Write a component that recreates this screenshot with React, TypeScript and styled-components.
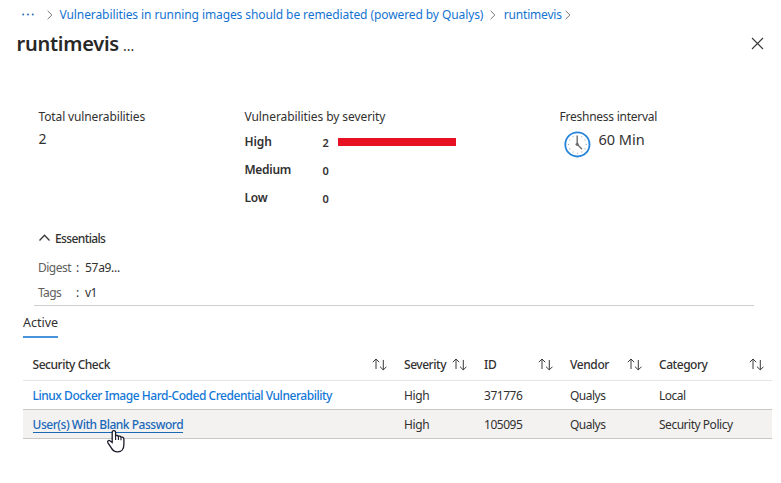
import React from 'react';
import styled, { createGlobalStyle } from 'styled-components';

const GlobalStyle = createGlobalStyle`
  * { box-sizing: border-box; }
  body {
    margin: 0;
    background: #fff;
    color: #323130;
    font-family: "Noto Sans", "Open Sans", sans-serif;
    font-size: 12px;
    overflow: hidden;
  }
`;

const Text = styled.span<{ $size?: number; $weight?: number; $track?: number; $color?: string }>`
  font-size: ${(p) => p.$size ?? 12}px;
  font-weight: ${(p) => p.$weight ?? 400};
  letter-spacing: ${(p) => p.$track ?? 0}px;
  color: ${(p) => p.$color ?? '#323130'};
  white-space: nowrap;
`;

const Page = styled.main`
  position: relative;
  width: 781px;
  height: 483px;
  overflow: hidden;
  background: #fff;
`;

const Breadcrumb = styled.nav`
  display: flex;
  align-items: center;
  height: 28px;
  padding: 1px 0 0 22px;
`;

const Crumb = styled.a<{ $track: number; $gap: number }>`
  color: #1373d1;
  letter-spacing: ${(p) => p.$track}px;
  margin-left: ${(p) => p.$gap}px;
  white-space: nowrap;
`;

const ChevronSvg = styled.svg<{ $gap: number }>`
  flex: none;
  margin-left: ${(p) => p.$gap}px;
`;

const Header = styled.header`
  display: flex;
  align-items: center;
  height: 31px;
  padding: 0 17px 0 16px;
`;

const Title = styled.h1`
  margin: 0 0 0 0.5px;
  font-size: 20px;
  font-weight: 600;
  letter-spacing: -0.25px;
  line-height: 28px;
  color: #292827;
`;

const More = styled.span`
  margin: 5px auto 0 4px;
  font-size: 14px;
  line-height: 20px;
`;

const Summary = styled.section`
  display: grid;
  grid-template-columns: 206px 315px 1fr;
  height: 169px;
  padding: 49px 0 0 38.5px;
`;

const Metric = styled.div`
  display: flex;
  flex-direction: column;
  align-items: flex-start;
  line-height: 18px;
`;

const MetricValue = styled.div`
  display: flex;
  align-items: flex-start;
  padding-top: 4px;
`;

const ClockSvg = styled.svg`
  flex: none;
  margin: 1px 8px 0 4px;
`;

const SeverityList = styled.div`
  padding-top: 2px;
`;

const SeverityRow = styled.div`
  display: grid;
  grid-template-columns: 78px 15.5px 118px;
  align-items: center;
  height: 28px;
`;

const Count = styled.span`
  padding-top: 2px;
  font-size: 11px;
  font-weight: 600;
`;

const Bar = styled.div`
  height: 8px;
  background: #e81123;
`;

const Essentials = styled.section`
  width: 720px;
  height: 78px;
  margin-left: 34px;
  padding-left: 4px;
  border-bottom: 1px solid #cfcfcf;
`;

const EssentialsToggle = styled.div`
  display: flex;
  align-items: center;
  gap: 4px;
  height: 20px;
`;

const Property = styled.div`
  display: grid;
  grid-template-columns: 38px 9px 1fr;
  align-items: center;
  height: 25px;
  line-height: 25px;
`;

const PropertyList = styled.div`
  padding-top: 7px;
`;

const Tabs = styled.div`
  display: flex;
  height: 32px;
  padding-left: 23px;
`;

const Tab = styled.div`
  width: 35px;
  height: 32px;
  border-bottom: 2px solid #4a94dc;
  line-height: 33px;
`;

const Table = styled.div`
  width: 749px;
  margin-left: 23px;
`;

const Row = styled.div<{ $kind: 'head' | 'plain' | 'hover' }>`
  display: grid;
  grid-template-columns: 371.5px 80px 86px 89px 113px;
  align-items: center;
  height: ${(p) => (p.$kind === 'head' ? 43 : 29)}px;
  padding: ${(p) => (p.$kind === 'head' ? '10px 0 0 9.5px' : '0 0 0 9.5px')};
  background: ${(p) => (p.$kind === 'hover' ? '#f3f2f1' : '#fff')};
  border-bottom: 1px solid ${(p) => (p.$kind === 'head' ? '#e6e6e6' : '#c8c8c8')};
`;

const HeadCell = styled.div<{ $last?: boolean }>`
  display: flex;
  align-items: center;
  justify-content: space-between;
  padding-right: ${(p) => (p.$last ? 8.5 : 17.5)}px;
`;

const CheckLink = styled.a<{ $underlined?: boolean; $track: number }>`
  justify-self: start;
  height: 16px;
  margin-top: 1px;
  font-weight: 500;
  line-height: 16px;
  letter-spacing: ${(p) => p.$track}px;
  color: ${(p) => (p.$underlined ? '#1a68b8' : '#1277d6')};
  box-shadow: ${(p) => (p.$underlined ? '0 -1px 0 #1a68b8 inset' : 'none')};
  white-space: nowrap;
`;

const Pointer = styled.svg`
  position: absolute;
  left: 106px;
  top: 429px;
`;

function Chevron({ gap }: { gap: number }) {
  return (
    <ChevronSvg $gap={gap} width="6" height="10" viewBox="0 0 6 10" fill="none" stroke="#797775">
      <path d="M0.6 0.8 4.9 5 0.6 9.2" />
    </ChevronSvg>
  );
}

function SortIcon() {
  return (
    <svg width="15" height="13" viewBox="0 0 15 13" fill="none" stroke="#3b3a39">
      <path d="M4 11V1.2M0.8 4.2 4 1l3.2 3.2M11.3 2v9.800M8 8.700l3.300 3.200 3.200-3.200" />
    </svg>
  );
}

const ticks = [30, 60, 90, 120, 150, 180, 210, 240, 270, 300, 330];

function Clock() {
  return (
    <ClockSvg width="27" height="27" viewBox="0 0 27 27">
      <circle cx="13.4" cy="13.4" r="12.1" fill="#fff" stroke="#2584db" strokeWidth="1.8" />
      {ticks.map((angle) => (
        <circle key={angle} cx="13.4" cy="4.6" r="0.55" fill="#999" transform={`rotate(${angle} 13.4 13.4)`} />
      ))}
      <path d="M13.2 4.5V13.2L18 18.3" fill="none" stroke="#777" strokeWidth="1.5" />
      <circle cx="13.2" cy="13.3" r="1.6" fill="#6e6e6e" />
    </ClockSvg>
  );
}

const severities = [
  { name: 'High', count: 2, track: -0.1 },
  { name: 'Medium', count: 0, track: -0.3 },
  { name: 'Low', count: 0, track: -0.2 },
];

const columns = [
  { name: 'Security Check', track: -0.46 },
  { name: 'Severity', track: -0.46 },
  { name: 'ID', track: -0.3 },
  { name: 'Vendor', track: -0.4 },
  { name: 'Category', track: -0.46 },
];

const checks = [
  { name: 'Linux Docker Image Hard-Coded Credential Vulnerability', severity: 'High', id: '371776', vendor: 'Qualys', category: 'Local', track: -0.46, hover: false },
  { name: 'User(s) With Blank Password', severity: 'High', id: '105095', vendor: 'Qualys', category: 'Security Policy', track: -0.47, hover: true },
];

export default function App() {
  return (
    <Page>
      <GlobalStyle />
      <Breadcrumb>
        <svg width="13" height="3" viewBox="0 0 13 3" fill="#2d6fbe">
          <circle cx="1.2" cy="1.5" r="1" />
          <circle cx="6" cy="1.5" r="1" />
          <circle cx="10.8" cy="1.5" r="1" />
        </svg>
        <Chevron gap={12} />
        <Crumb $track={-0.09} $gap={6.5}>Vulnerabilities in running images should be remediated (powered by Qualys)</Crumb>
        <Chevron gap={7} />
        <Crumb $track={-0.2} $gap={7.5}>runtimevis</Crumb>
        <Chevron gap={3} />
      </Breadcrumb>
      <Header>
        <Title>runtimevis</Title>
        <More>...</More>
        <svg width="13" height="13" viewBox="0 0 13 13" stroke="#3b3a39" strokeWidth="1.1">
          <path d="M1 1l11 11M12 1 1 12" />
        </svg>
      </Header>
      <Summary>
        <Metric>
          <Text $track={-0.13}>Total vulnerabilities</Text>
          <MetricValue><Text $size={14}>2</Text></MetricValue>
        </Metric>
        <Metric>
          <Text $track={-0.08}>Vulnerabilities by severity</Text>
          <SeverityList>
            {severities.map((s) => (
              <SeverityRow key={s.name}>
                <Text $weight={600} $track={s.track}>{s.name}</Text>
                <Count>{s.count}</Count>
                {s.count > 0 && <Bar />}
              </SeverityRow>
            ))}
          </SeverityList>
        </Metric>
        <Metric>
          <Text $track={-0.25}>Freshness interval</Text>
          <MetricValue>
            <Clock />
            <Text $size={14.5}>60 Min</Text>
          </MetricValue>
        </Metric>
      </Summary>
      <Essentials>
        <EssentialsToggle>
          <svg width="13" height="8" viewBox="0 0 13 8" fill="none" stroke="#3b3a39" strokeWidth="1.3">
            <path d="M1.5 6.5 6.5 1.2l5 5.3" />
          </svg>
          <Text $weight={500} $track={-0.62}>Essentials</Text>
        </EssentialsToggle>
        <PropertyList>
          <Property>
            <Text $track={-0.5} $color="#605e5c">Digest</Text>
            <Text>:</Text>
            <Text $track={-0.3}>57a9...</Text>
          </Property>
          <Property>
            <Text $track={-0.6} $color="#605e5c">Tags</Text>
            <Text>:</Text>
            <Text $track={-0.5}>v1</Text>
          </Property>
        </PropertyList>
      </Essentials>
      <Tabs>
        <Tab><Text $size={12.5}>Active</Text></Tab>
      </Tabs>
      <Table>
        <Row $kind="head">
          {columns.map((c, i) => (
            <HeadCell key={c.name} $last={i === columns.length - 1}>
              <Text $weight={500} $track={c.track}>{c.name}</Text>
              <SortIcon />
            </HeadCell>
          ))}
        </Row>
        {checks.map((c) => (
          <Row key={c.id} $kind={c.hover ? 'hover' : 'plain'}>
            <CheckLink $underlined={c.hover} $track={c.track}>{c.name}</CheckLink>
            <Text $track={-0.4}>{c.severity}</Text>
            <Text $track={-0.48}>{c.id}</Text>
            <Text $track={-0.5}>{c.vendor}</Text>
            <Text $track={-0.48}>{c.category}</Text>
          </Row>
        ))}
      </Table>
      <Pointer width="20" height="26" viewBox="0 0 20 26">
        <path
          d="M6.200 3.500c0-2.600 3.400-2.600 3.400 0v3.300c1.200-.7 2.400-.3 2.800.6 1-.6 2.300-.2 2.600.8 1.300-.4 2.900.2 2.900 2v5.300c0 4.300-2.300 7.400-6.300 7.400-3.300 0-5.200-1.900-6.300-4L1.900 13.800c-.9-1.700.9-3.100 2.300-1.900l2 1.600Z"
          fill="#fff"
          stroke="#1a1a2a"
          strokeWidth="1.3"
        />
        <path d="M9.600 6.800v4.200M12.400 7.600v3.400M15 8.400v2.800" stroke="#1a1a2a" strokeWidth="1.100" />
      </Pointer>
    </Page>
  );
}
